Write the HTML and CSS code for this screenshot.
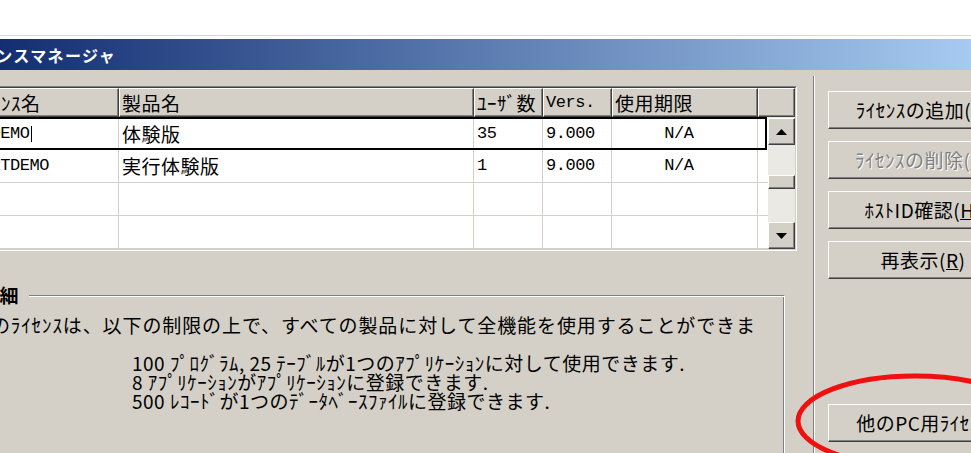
FILE: index.html
```html
<!DOCTYPE html>
<html lang="ja">
<head>
<meta charset="utf-8">
<title>ライセンスマネージャ</title>
<link rel="stylesheet" href="styles.css">
</head>
<body>
<div class="desk"></div>
<div class="dlg">
  <div class="titlebar"><span class="title">ライセンスマネージャ</span></div>
  <div class="client">
    <div class="main">
      <div class="list">
        <div class="list-in">
          <div class="list-head">
            <div class="hc c-name">ﾗｲｾﾝｽ名</div>
            <div class="hc c-prod">製品名</div>
            <div class="hc c-users">ﾕｰｻﾞ数</div>
            <div class="hc c-ver mono">Vers.</div>
            <div class="hc c-exp">使用期限</div>
            <div class="hc c-fill"></div>
          </div>
          <div class="list-body">
            <div class="rows">
              <div class="row sel">
                <div class="cell c-name mono">MGDEMO<span class="caret"></span></div>
                <div class="cell c-prod">体験版</div>
                <div class="cell c-users mono">35</div>
                <div class="cell c-ver mono">9.000</div>
                <div class="cell c-exp mono">N/A</div>
              </div>
              <div class="row">
                <div class="cell c-name mono">MGRTDEMO</div>
                <div class="cell c-prod">実行体験版</div>
                <div class="cell c-users mono">1</div>
                <div class="cell c-ver mono">9.000</div>
                <div class="cell c-exp mono">N/A</div>
              </div>
              <div class="row">
                <div class="cell c-name"></div>
                <div class="cell c-prod"></div>
                <div class="cell c-users"></div>
                <div class="cell c-ver"></div>
                <div class="cell c-exp"></div>
              </div>
              <div class="row">
                <div class="cell c-name"></div>
                <div class="cell c-prod"></div>
                <div class="cell c-users"></div>
                <div class="cell c-ver"></div>
                <div class="cell c-exp"></div>
              </div>
            </div>
            <div class="vscroll">
              <div class="sb-btn"><svg width="11" height="6" viewBox="0 0 11 6"><polygon points="0,6 5.5,0 11,6" fill="#000"/></svg></div>
              <div class="sb-thumb"></div>
              <div class="sb-btn sb-down"><svg width="11" height="6" viewBox="0 0 11 6"><polygon points="0,0 11,0 5.5,6" fill="#000"/></svg></div>
            </div>
          </div>
        </div>
      </div>
      <fieldset class="group">
        <legend>詳細</legend>
        <p class="lead">このﾗｲｾﾝｽは、以下の制限の上で、すべての製品に対して全機能を使用することができます。</p>
        <p class="limits">100 ﾌﾟﾛｸﾞﾗﾑ, 25 ﾃｰﾌﾞﾙが1つのｱﾌﾟﾘｹｰｼｮﾝに対して使用できます.<br>8 ｱﾌﾟﾘｹｰｼｮﾝがｱﾌﾟﾘｹｰｼｮﾝに登録できます.<br>500 ﾚｺｰﾄﾞが1つのﾃﾞｰﾀﾍﾞｰｽﾌｧｲﾙに登録できます.</p>
      </fieldset>
    </div>
    <div class="sep"></div>
    <div class="actions">
      <button class="btn" type="button">ﾗｲｾﾝｽの追加(<u>A</u>)</button>
      <button class="btn" type="button" disabled>ﾗｲｾﾝｽの削除(<u>D</u>)</button>
      <button class="btn" type="button">ﾎｽﾄID確認(<u>H</u>)</button>
      <button class="btn" type="button">再表示(<u>R</u>)</button>
      <button class="btn btn-other" type="button">他のPC用ﾗｲｾﾝｽ</button>
    </div>
  </div>
</div>
<svg class="mark" width="971" height="453" viewBox="0 0 971 453">
  <ellipse cx="915" cy="421" rx="117" ry="45" fill="none" stroke="#f01010" stroke-width="5"/>
</svg>
</body>
</html>
```
FILE: styles.css
```css
* { box-sizing: border-box; }

html, body { margin: 0; padding: 0; }

body {
  position: relative;
  width: 971px;
  height: 453px;
  overflow: hidden;
  background: #fff;
  color: #000;
  font-family: "Noto Sans CJK JP", "Noto Sans", sans-serif;
  font-size: 19px;
  letter-spacing: 0.5px;
}

/* desktop strip above the dialog */
.desk {
  height: 36px;
  border-bottom: 1px solid #d8d8d8;
  margin-bottom: 3px;
}

.dlg {
  margin-left: -60px;
  width: 1120px;
  height: 414px;
  background: #d4d0c8;
}

.titlebar {
  height: 31px;
  padding-left: 4px;
  display: flex;
  align-items: center;
  background: linear-gradient(to right, #0a246a 0%, #a6caf0 92%);
}

.title {
  color: #fff;
  font-size: 16px;
  font-weight: 700;
  letter-spacing: 1.4px;
  line-height: 20px;
}

.client {
  display: flex;
  align-items: flex-start;
  padding: 16px 0 0 25px;
}

.main { flex: none; width: 832px; }

/* license list (sunken frame) */
.list {
  border: 1px solid;
  border-color: #808080 #fff #fff #808080;
}

.list-in {
  border: 1px solid;
  border-color: #404040 #d4d0c8 #d4d0c8 #404040;
}

.list-head { display: flex; height: 29px; }

.hc {
  flex: none;
  height: 29px;
  padding-left: 2px;
  display: flex;
  align-items: center;
  line-height: 22px;
  white-space: nowrap;
  overflow: hidden;
  background: #d4d0c8;
  border: 1px solid;
  border-color: #fff #404040 #404040 #fff;
  box-shadow: inset -1px -1px #808080;
}

.hc.c-name { padding-left: 3px; }

.c-name { width: 152px; }
.c-prod { width: 355px; }
.c-users { width: 69px; }
.c-ver { width: 69px; }
.c-exp { width: 146px; }
.c-fill { width: 37px; }

.mono {
  font-family: "Liberation Mono", "DejaVu Sans Mono", monospace;
  font-size: 17px;
  letter-spacing: -0.45px;
}

.list-body { display: flex; background: #fff; }

.rows { flex: none; width: 801px; }

.row {
  display: flex;
  height: 33px;
  border-bottom: 1px solid #d4d0c8;
}

.row.sel {
  border: 2px solid #000;
  border-left: 0;
  margin-right: 1px;
}

.cell {
  flex: none;
  height: 100%;
  padding-left: 3px;
  display: flex;
  align-items: center;
  line-height: 22px;
  white-space: nowrap;
  overflow: hidden;
  border-right: 1px solid #d4d0c8;
}

.cell.c-name { padding-left: 4px; }
.cell.c-exp { justify-content: center; padding: 0 14px 0 3px; }

.caret {
  display: inline-block;
  width: 1px;
  height: 16px;
  margin-left: 1px;
  background: #000;
}

/* vertical scrollbar */
.vscroll {
  flex: none;
  width: 27px;
  height: 132px;
  padding-top: 1px;
  display: flex;
  flex-direction: column;
  background: #ebe9e4;
}

.sb-btn,
.sb-thumb {
  background: #d4d0c8;
  border: 1px solid;
  border-color: #fff #404040 #404040 #fff;
  box-shadow: inset -1px -1px #808080;
}

.sb-btn {
  height: 27px;
  display: flex;
  align-items: center;
  justify-content: center;
}

.sb-btn svg { display: block; }

.sb-thumb { height: 14px; margin-top: 30px; }

.sb-down { margin-top: auto; }

/* details group box */
.group {
  margin: 33px 12px 0 0;
  padding: 0;
  min-width: 0;
  height: 200px;
  border: 0;
  border-top: 1px solid #808080;
  border-right: 1px solid #fff;
  box-shadow: inset 0 1px #fff, inset -1px 0 #808080;
}

.group legend {
  margin-left: 15px;
  padding: 0 10px 0 0;
  font-weight: 700;
  line-height: 22px;
  background: #d4d0c8;
}

.lead {
  margin: 8px 0 0 6px;
  width: 797px;
  height: 22px;
  overflow: hidden;
  line-height: 22px;
  letter-spacing: 0.9px;
}

.limits {
  margin: 17px 0 0 167px;
  line-height: 19px;
  white-space: nowrap;
}

/* separator between list and command buttons */
.sep {
  flex: none;
  width: 2px;
  height: 380px;
  margin: -10px 0 0 16px;
  border-left: 1px solid #808080;
  border-right: 1px solid #fff;
}

.actions {
  flex: none;
  width: 190px;
  margin: 5px 0 0 13px;
  display: flex;
  flex-direction: column;
  gap: 12px;
}

.btn {
  height: 38px;
  padding: 0;
  font: inherit;
  letter-spacing: inherit;
  line-height: 22px;
  color: #000;
  background: #d4d0c8;
  border: 1px solid;
  border-color: #fff #404040 #404040 #fff;
  box-shadow: inset -1px -1px #808080;
  display: flex;
  align-items: center;
  justify-content: center;
  white-space: nowrap;
}

.btn:disabled {
  color: #808080;
  text-shadow: 1px 1px 0 #fff;
}

.btn-other { margin-top: 113px; }

/* hand-drawn highlight around the other-PC button */
.mark {
  position: absolute;
  left: 0;
  top: 0;
  pointer-events: none;
}
```
